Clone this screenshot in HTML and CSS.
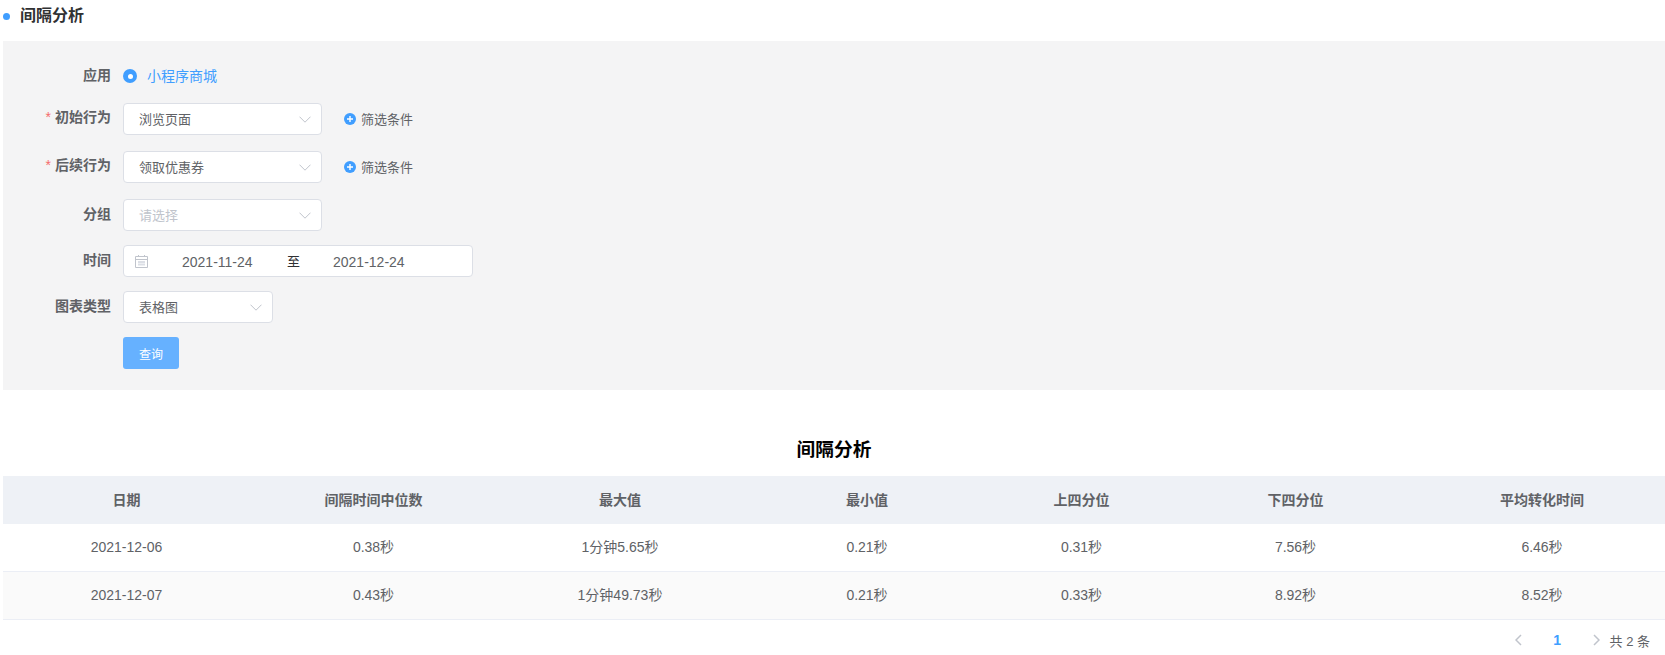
FILE: index.html
```html
<!DOCTYPE html>
<html lang="zh-CN">
<head>
<meta charset="utf-8">
<title>间隔分析</title>
<link rel="stylesheet" href="styles.css">
</head>
<body>
<div class="page">
  <h2 class="page-title"><span class="dot"></span><span class="title-text">间隔分析</span></h2>
  <section class="panel">
    <div class="row row-app">
      <label class="label">应用</label>
      <div class="radio"><span class="radio-mark"></span><span class="radio-text">小程序商城</span></div>
    </div>
    <div class="row row-a">
      <label class="label"><span class="req">*</span>初始行为</label>
      <div class="select"><span>浏览页面</span><svg class="chev" viewBox="0 0 12 7"><path d="M.5.7 6 6.2 11.5.7"/></svg></div>
      <a class="filter"><svg class="plus" viewBox="0 0 12 12"><circle cx="6" cy="6" r="6"/><path d="M3 6h6M6 3v6"/></svg><span>筛选条件</span></a>
    </div>
    <div class="row row-a">
      <label class="label"><span class="req">*</span>后续行为</label>
      <div class="select"><span>领取优惠券</span><svg class="chev" viewBox="0 0 12 7"><path d="M.5.7 6 6.2 11.5.7"/></svg></div>
      <a class="filter"><svg class="plus" viewBox="0 0 12 12"><circle cx="6" cy="6" r="6"/><path d="M3 6h6M6 3v6"/></svg><span>筛选条件</span></a>
    </div>
    <div class="row row-b">
      <label class="label">分组</label>
      <div class="select"><span class="ph">请选择</span><svg class="chev" viewBox="0 0 12 7"><path d="M.5.7 6 6.2 11.5.7"/></svg></div>
    </div>
    <div class="row row-b">
      <label class="label">时间</label>
      <div class="date">
        <svg class="cal" viewBox="0 0 13 13"><path class="cal-line" d="M.5 1.5h12v11H.5zM.5 4.5h12M3.5 0v2M9.5 0v2"/><path class="cal-grid" d="M3 7h7M3 9.5h7"/></svg>
        <span class="date-val">2021-11-24</span><span class="date-sep">至</span><span class="date-val">2021-12-24</span>
      </div>
    </div>
    <div class="row row-b">
      <label class="label">图表类型</label>
      <div class="select select-s"><span>表格图</span><svg class="chev" viewBox="0 0 12 7"><path d="M.5.7 6 6.2 11.5.7"/></svg></div>
    </div>
    <div class="row row-b">
      <span class="label"></span>
      <button class="btn">查询</button>
    </div>
  </section>
  <h3 class="chart-title">间隔分析</h3>
  <table class="tbl">
    <colgroup><col class="c1"><col class="c2"><col class="c3"><col class="c4"><col class="c5"><col class="c6"><col class="c7"></colgroup>
    <thead><tr><th>日期</th><th>间隔时间中位数</th><th>最大值</th><th>最小值</th><th>上四分位</th><th>下四分位</th><th>平均转化时间</th></tr></thead>
    <tbody>
      <tr><td class="latin">2021-12-06</td><td>0.38秒</td><td>1分钟5.65秒</td><td>0.21秒</td><td>0.31秒</td><td>7.56秒</td><td>6.46秒</td></tr>
      <tr class="alt"><td class="latin">2021-12-07</td><td>0.43秒</td><td>1分钟49.73秒</td><td>0.21秒</td><td>0.33秒</td><td>8.92秒</td><td>8.52秒</td></tr>
    </tbody>
  </table>
  <div class="pager">
    <svg class="arr" viewBox="0 0 7 12"><path d="M6 1 1 6l5 5"/></svg>
    <span class="num">1</span>
    <svg class="arr" viewBox="0 0 7 12"><path d="m1 1 5 5-5 5"/></svg>
    <span class="total">共 2 条</span>
  </div>
</div>
</body>
</html>
```
FILE: styles.css
```css
* { box-sizing: border-box; }
html, body { margin: 0; padding: 0; background: #fff; }
body { font-family: "Liberation Sans", "Noto Sans CJK SC", sans-serif; color: #606266; overflow: hidden; }
.page { width: 1665px; height: 655px; padding-left: 3px; }
.page-title { display: flex; align-items: center; height: 31px; margin: 0; font-size: 16px; font-weight: 700; color: #303133; }
.title-text { margin-bottom: 4px; }
.dot { width: 7px; height: 7px; border-radius: 50%; background: #409eff; margin: 1px 10px 0 0; }
.panel { margin-top: 10px; height: 349px; background: #f4f4f5; padding-top: 25px; }
.row { display: flex; align-items: flex-start; }
.row-app { height: 20px; margin-bottom: 17px; }
.row-a { height: 32px; margin-bottom: 16px; }
.row-b { height: 32px; margin-bottom: 14px; }
.label { width: 108px; margin-right: 12px; text-align: right; font-size: 14px; font-weight: 700; line-height: 28px; white-space: nowrap; }
.row-app .label { line-height: 18px; }
.row-b .label { line-height: 30px; }
.req { color: #f56c6c; margin-right: 4px; font-weight: 400; }
.radio { display: flex; align-items: center; height: 20px; }
.radio-mark { width: 14px; height: 14px; border-radius: 50%; background: #409eff; position: relative; margin-right: 10px; }
.radio-mark::after { content: ""; position: absolute; left: 4.5px; top: 4.5px; width: 5px; height: 5px; border-radius: 50%; background: #fff; }
.radio-text { font-size: 14px; color: #409eff; margin-bottom: 2px; }
.select { width: 199px; height: 32px; background: #fff; border: 1px solid #dcdfe6; border-radius: 4px; display: flex; align-items: center; justify-content: space-between; padding: 0 10px 0 15px; font-size: 13px; }
.select span { margin-bottom: 2px; }
.select-s { width: 150px; }
.ph { color: #c0c4cc; }
.chev { width: 12px; height: 7px; fill: none; stroke: #c0c4cc; stroke-width: 1; }
.filter { display: flex; align-items: center; height: 32px; margin-left: 22px; font-size: 13px; color: #606266; }
.filter span { margin-bottom: 2px; }
.plus { width: 12px; height: 12px; margin-right: 5px; fill: #409eff; stroke: none; }
.plus path { fill: none; stroke: #fff; stroke-width: 1.4; }
.date { width: 350px; height: 32px; background: #fff; border: 1px solid #dcdfe6; border-radius: 4px; display: flex; align-items: center; padding-left: 11px; font-size: 14px; }
.cal { width: 13px; height: 13px; fill: none; stroke-width: 1; margin-right: 34px; }
.cal-line { stroke: #c0c4cc; }
.cal-grid { stroke: #dcdfe6; stroke-width: 2; }
.date-val { width: 72px; margin-top: 2px; }
.date-sep { width: 79px; color: #303133; text-align: center; font-size: 13px; margin-bottom: 2px; }
.btn { width: 56px; height: 32px; border: 0; border-radius: 3px; background: #66b1ff; color: #fff; font: 12px "Liberation Sans", "Noto Sans CJK SC", sans-serif; padding: 0; }
.chart-title { margin: 47px 0 0; height: 39px; text-align: center; font-size: 18.72px; font-weight: 700; color: #000; line-height: 26px; }
.tbl { width: 1662px; border-collapse: separate; border-spacing: 0; table-layout: fixed; font-size: 14px; color: #606266; }
.c1 { width: 247px; } .c2 { width: 247px; } .c3 { width: 246px; } .c4 { width: 248px; }
.c5 { width: 181px; } .c6 { width: 247px; } .c7 { width: 246px; }
.tbl th { height: 48px; background: #eef1f6; font-weight: 700; padding: 0 0 2px; }
.tbl td { height: 48px; text-align: center; padding: 0 0 3px; border-bottom: 1px solid #ebeef5; }
.tbl td.latin { padding-bottom: 1px; }
.alt td { background: #fafafa; }
.pager { display: flex; align-items: center; justify-content: flex-end; height: 40px; padding-right: 15px; font-size: 13px; }
.arr { width: 7px; height: 12px; fill: none; stroke: #c0c4cc; stroke-width: 1.5; }
.num { width: 71px; text-align: center; color: #409eff; font-size: 14px; font-weight: 700; }
.total { margin-left: 10px; color: #606266; }
```
